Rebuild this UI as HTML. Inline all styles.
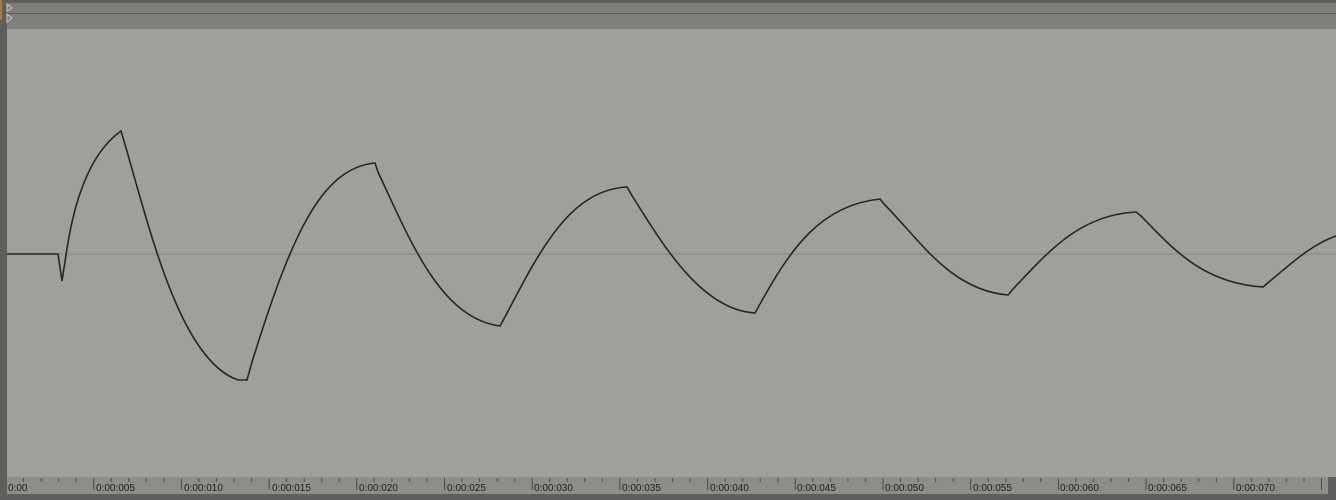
<!DOCTYPE html>
<html><head><style>
html,body{margin:0;padding:0;width:1336px;height:500px;overflow:hidden;background:#5f5f5d;font-family:"Liberation Sans",sans-serif}
</style></head><body>
<svg width="1336" height="500" viewBox="0 0 1336 500" xmlns="http://www.w3.org/2000/svg" style="position:absolute;left:0;top:0">
<defs>
<pattern id="tk" x="5.5" y="478" width="87.7" height="16" patternUnits="userSpaceOnUse">
<line x1="0.5" y1="0" x2="0.5" y2="12" stroke="#4a4a48" stroke-width="1"/>
<line x1="18" y1="0" x2="18" y2="4" stroke="#4a4a48" stroke-width="1"/>
<line x1="35.6" y1="0" x2="35.6" y2="4" stroke="#4a4a48" stroke-width="1"/>
<line x1="53.1" y1="0" x2="53.1" y2="4" stroke="#4a4a48" stroke-width="1"/>
<line x1="70.7" y1="0" x2="70.7" y2="4" stroke="#4a4a48" stroke-width="1"/>
</pattern>
</defs>
<rect x="0" y="0" width="1336" height="500" fill="#5f5f5d"/>
<rect x="7" y="3" width="1329" height="10" fill="#7f7f7b"/>
<rect x="7" y="14" width="1329" height="15" fill="#7f7f7b"/>
<rect x="7" y="29" width="1329" height="448" fill="#a09f9c"/>
<rect x="7" y="477" width="1321" height="17" fill="#8e8d8a"/>
<rect x="7" y="478" width="1321" height="14" fill="url(#tk)"/>
<rect x="0" y="0" width="2" height="20" fill="#b07a3a"/>
<polygon points="7,4 12,8 7,11" fill="none" stroke="#c8c8c5" stroke-width="1"/>
<polygon points="7,14 12,18 7,22" fill="none" stroke="#c8c8c5" stroke-width="1"/>
<line x1="7" y1="254" x2="1336" y2="254" stroke="#868582" stroke-width="1"/>
<path d="M7,254 L58,254 L62,281 L66,255 C70,230 80,160 121,131 L124,141 C150,230 180,360 238,380 L247,380 L252,362 C290,240 320,168 375,163 L378,172 C410,240 440,318 500,326 L505,317 C540,250 570,190 627,187 L631,194 C660,240 700,310 755,313 L760,304 C790,250 820,205 880,199 L884,204 C920,240 950,290 1008,295 L1013,289 C1050,250 1080,215 1136,212 L1141,216 C1170,245 1200,283 1263,287 L1270,281 C1290,265 1310,245 1336,236" fill="none" stroke="#262626" stroke-width="1.6"/>
<g font-size="10" fill="#1e1e1e">
<text x="8" y="491">0:00</text>
<text x="96" y="491">0:00:005</text>
<text x="184" y="491">0:00:010</text>
<text x="272" y="491">0:00:015</text>
<text x="359" y="491">0:00:020</text>
<text x="447" y="491">0:00:025</text>
<text x="534" y="491">0:00:030</text>
<text x="622" y="491">0:00:035</text>
<text x="710" y="491">0:00:040</text>
<text x="797" y="491">0:00:045</text>
<text x="885" y="491">0:00:050</text>
<text x="973" y="491">0:00:055</text>
<text x="1060" y="491">0:00:060</text>
<text x="1148" y="491">0:00:065</text>
<text x="1236" y="491">0:00:070</text>
</g>
</svg>
</body></html>
